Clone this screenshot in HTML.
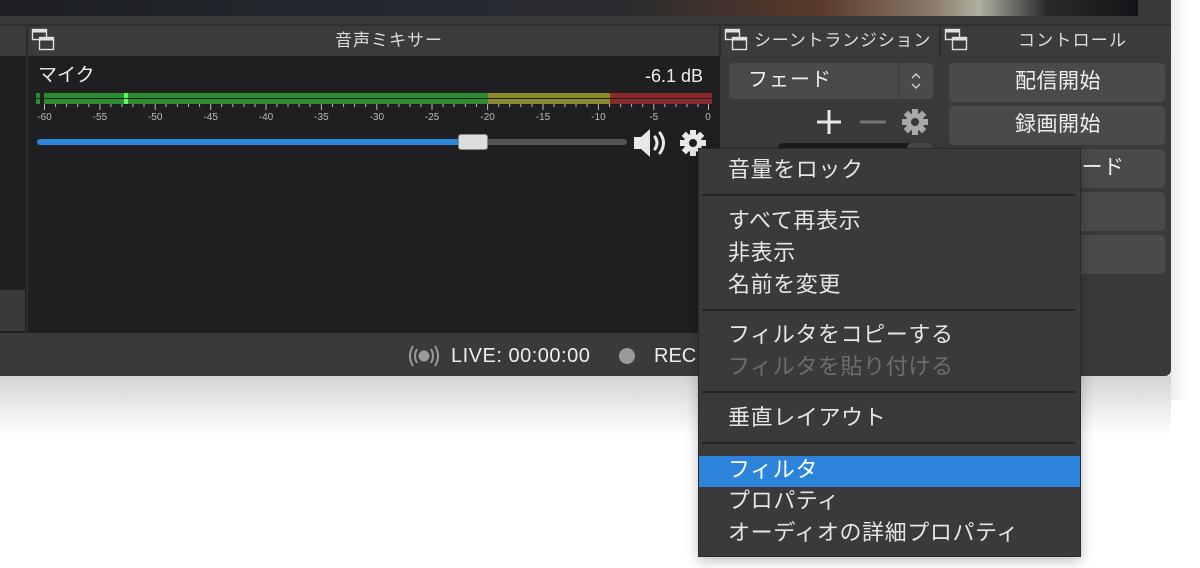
<!DOCTYPE html>
<html><head><meta charset="utf-8">
<style>
*{margin:0;padding:0;box-sizing:border-box}
body{width:1200px;height:568px;background:#fff;position:relative;overflow:hidden;font-family:"Liberation Sans","Noto Sans CJK JP",sans-serif;color:#e6e6e6}
.a{position:absolute}
.t{position:absolute;white-space:nowrap;line-height:1}
.m{position:absolute;white-space:nowrap;line-height:1;font-size:22px;letter-spacing:0.6px;left:728px}
</style></head><body>
<div class="a" style="left:0;top:376px;width:1171px;height:60px;background:linear-gradient(#d4d4d4,#fff)"></div>
<div class="a" style="left:1171px;top:0;width:29px;height:400px;background:linear-gradient(90deg,#ececec,#fff 60%)"></div>
<div class="a" style="left:0;top:0;width:1171px;height:376px;background:#3a393b;border-radius:0 0 6px 0"></div>
<div class="a" style="left:0;top:0;width:1138px;height:16px;background:linear-gradient(90deg,#1d1f24 0%,#262a30 40%,#2a2b2e 55%,#5a3a2a 72%,#8a7a6a 82%,#b0b0a0 86%,#2a2a2c 92%,#141418 100%)"></div>
<div class="a" style="left:0;top:24px;width:1171px;height:2px;background:#2f2e30"></div>
<div class="a" style="left:0;top:26px;width:1171px;height:30px;background:#3b3a3c"></div>
<div class="a" style="left:26px;top:26px;width:2px;height:307px;background:#2c2b2d"></div>
<div class="a" style="left:719px;top:26px;width:2px;height:30px;background:#2c2b2d"></div>
<div class="a" style="left:939px;top:26px;width:2px;height:30px;background:#2c2b2d"></div>
<svg class="a" style="left:31px;top:28px" width="26" height="26" viewBox="0 0 26 26" fill="none" stroke="#e0e0e0" stroke-width="1.4"><rect x="1.5" y="1.5" width="14" height="10"/><path d="M1.5 3h14" stroke-width="3"/><rect x="8.5" y="9.5" width="14" height="12" fill="#3b3a3c"/><path d="M8.5 11h14" stroke-width="3"/></svg>
<svg class="a" style="left:724px;top:28px" width="26" height="26" viewBox="0 0 26 26" fill="none" stroke="#e0e0e0" stroke-width="1.4"><rect x="1.5" y="1.5" width="14" height="10"/><path d="M1.5 3h14" stroke-width="3"/><rect x="8.5" y="9.5" width="14" height="12" fill="#3b3a3c"/><path d="M8.5 11h14" stroke-width="3"/></svg>
<svg class="a" style="left:944px;top:28px" width="26" height="26" viewBox="0 0 26 26" fill="none" stroke="#e0e0e0" stroke-width="1.4"><rect x="1.5" y="1.5" width="14" height="10"/><path d="M1.5 3h14" stroke-width="3"/><rect x="8.5" y="9.5" width="14" height="12" fill="#3b3a3c"/><path d="M8.5 11h14" stroke-width="3"/></svg>
<div class="t" style="left:335px;top:32px;font-size:17px;letter-spacing:1px;color:#ddd">音声ミキサー</div>
<div class="t" style="left:754px;top:32px;font-size:17px;letter-spacing:0.8px;color:#ddd">シーントランジション</div>
<div class="t" style="left:1018px;top:32px;font-size:17px;letter-spacing:1.2px;color:#ddd">コントロール</div>
<div class="a" style="left:0;top:56px;width:26px;height:277px;background:#1f1e20"></div>
<div class="a" style="left:0;top:290px;width:25px;height:41px;background:#3a393b"></div>
<div class="a" style="left:28px;top:56px;width:692px;height:277px;background:#1f1e20"></div>
<div class="t" style="left:38px;top:66px;font-size:19px;color:#eee">マイク</div>
<div class="t" style="left:645px;top:67px;font-size:18px;color:#eee">-6.1 dB</div>
<div class="a" style="left:36px;top:93px;width:4px;height:5px;background:#2e8a2e"></div>
<div class="a" style="left:36px;top:99px;width:4px;height:5px;background:#2e8a2e"></div>
<div class="a" style="left:44px;top:93px;width:444px;height:5px;background:#2e8a2e"></div>
<div class="a" style="left:44px;top:99px;width:444px;height:5px;background:#2e8a2e"></div>
<div class="a" style="left:488px;top:93px;width:122px;height:5px;background:#8a8a2e"></div>
<div class="a" style="left:488px;top:99px;width:122px;height:5px;background:#8a8a2e"></div>
<div class="a" style="left:610px;top:93px;width:102px;height:5px;background:#8a2a2a"></div>
<div class="a" style="left:610px;top:99px;width:102px;height:5px;background:#8a2a2a"></div>
<div class="a" style="left:124px;top:93px;width:4px;height:11px;background:#5f5"></div>
<div class="a" style="left:124px;top:98px;width:4px;height:1px;background:#1f1e20"></div>
<svg class="a" style="left:30px;top:104px" width="690" height="22">
<g stroke="#bbb" stroke-width="1">
<path d="M14.5 0v6M25.6 0v3M36.6 0v3M47.7 0v3M58.8 0v3M69.9 0v6M80.9 0v3M92 0v3M103 0v3M114 0v3M125.2 0v6M136 0v3M147.4 0v3M158.5 0v3M169.6 0v3M180.7 0v6M191.7 0v3M202.8 0v3M213.9 0v3M225 0v3M236 0v6M247 0v3M258 0v3M269 0v3M280 0v3M291.4 0v6M302.5 0v3M313.6 0v3M324.6 0v3M335.7 0v3M346.8 0v6M357.9 0v3M368.9 0v3M380 0v3M391 0v3M402 0v6M413 0v3M424 0v3M435.4 0v3M446.5 0v3M457.6 0v6M468.7 0v3M479.7 0v3M490.8 0v3M501.9 0v3M513 0v6M524 0v3M535 0v3M546 0v3M557 0v3M568.4 0v6M579.5 0v3M590.6 0v3M601.6 0v3M612.7 0v3M623.8 0v6M634.8 0v3M645.9 0v3M657 0v3M668 0v3M678.5 0v6"/></g>
<g fill="#bbb" font-size="10" font-family="Liberation Sans" text-anchor="middle">
<text x="14.5" y="16">-60</text><text x="69.9" y="16">-55</text><text x="125.2" y="16">-50</text><text x="180.7" y="16">-45</text><text x="236" y="16">-40</text><text x="291.4" y="16">-35</text><text x="346.8" y="16">-30</text><text x="402" y="16">-25</text><text x="457.6" y="16">-20</text><text x="513" y="16">-15</text><text x="568.4" y="16">-10</text><text x="623.8" y="16">-5</text><text x="678" y="16">0</text></g></svg>
<div class="a" style="left:37px;top:139px;width:590px;height:6px;background:#555;border-radius:3px"></div>
<div class="a" style="left:37px;top:139px;width:430px;height:6px;background:#2d84db;border-radius:3px"></div>
<div class="a" style="left:458px;top:134px;width:30px;height:16px;background:#ddd;border:1px solid #888;border-radius:3px"></div>
<svg class="a" style="left:632px;top:128px" width="40" height="30" viewBox="0 0 40 30"><path d="M2 9h7l9-8v28l-9-8H2z" fill="#e8e8e8"/><path d="M23 9q4 6 0 12M28 5q7 10 0 20" stroke="#e8e8e8" stroke-width="3" fill="none" stroke-linecap="round"/></svg>
<svg class="a" style="left:679px;top:129px" width="28" height="28" viewBox="-14 -14 28 28"><g fill="#e8e8e8"><circle r="9"/><g id="tt"><rect x="-3" y="-13" width="6" height="6"/></g><use href="#tt" transform="rotate(45)"/><use href="#tt" transform="rotate(90)"/><use href="#tt" transform="rotate(135)"/><use href="#tt" transform="rotate(180)"/><use href="#tt" transform="rotate(225)"/><use href="#tt" transform="rotate(270)"/><use href="#tt" transform="rotate(315)"/></g><circle r="4" fill="#1f1e20"/></svg>
<div class="a" style="left:729px;top:63px;width:204px;height:36px;background:#4a494b;border-radius:5px"></div>
<div class="a" style="left:898px;top:63px;width:1px;height:36px;background:#3a393b"></div>
<div class="t" style="left:748px;top:70px;font-size:20px;letter-spacing:1px;color:#eee">フェード</div>
<svg class="a" style="left:909px;top:71px" width="14" height="20" viewBox="0 0 14 20" fill="none" stroke="#ccc" stroke-width="1.5"><path d="M3 7l4-4 4 4M3 13l4 4 4-4"/></svg>
<svg class="a" style="left:815px;top:108px" width="110" height="28"><g stroke="#e8e8e8" stroke-width="3"><path d="M14 2v24M2 14h24"/></g><path d="M45 14h26" stroke="#777" stroke-width="3"/></svg>
<svg class="a" style="left:901px;top:108px" width="28" height="28" viewBox="-14 -14 28 28"><g fill="#a8a8a8"><circle r="9"/><g id="t2"><rect x="-3" y="-13" width="6" height="6"/></g><use href="#t2" transform="rotate(45)"/><use href="#t2" transform="rotate(90)"/><use href="#t2" transform="rotate(135)"/><use href="#t2" transform="rotate(180)"/><use href="#t2" transform="rotate(225)"/><use href="#t2" transform="rotate(270)"/><use href="#t2" transform="rotate(315)"/></g><circle r="4" fill="#3a393b"/></svg>
<div class="a" style="left:778px;top:143px;width:155px;height:12px;background:#1c1b1d;border-radius:5px 5px 0 0"></div>
<div class="a" style="left:907px;top:143px;width:26px;height:12px;background:#4a494b;border-radius:5px 5px 0 0"></div>
<div class="a" style="left:949px;top:63px;width:216px;height:39px;background:#4a494b;border-radius:4px"></div>
<div class="a" style="left:949px;top:106px;width:216px;height:39px;background:#4a494b;border-radius:4px"></div>
<div class="a" style="left:949px;top:149px;width:216px;height:39px;background:#4a494b;border-radius:4px"></div>
<div class="a" style="left:949px;top:192px;width:216px;height:39px;background:#4a494b;border-radius:4px"></div>
<div class="a" style="left:949px;top:235px;width:216px;height:39px;background:#4a494b;border-radius:4px"></div>
<div class="t" style="left:1015px;top:71px;font-size:21px;letter-spacing:0.5px;color:#eee">配信開始</div>
<div class="t" style="left:1015px;top:114px;font-size:21px;letter-spacing:0.5px;color:#eee">録画開始</div>
<div class="t" style="left:1060px;top:157px;font-size:21px;letter-spacing:0.5px;color:#eee">モード</div>
<svg class="a" style="left:407px;top:344px" width="34" height="24" viewBox="0 0 34 24" fill="none" stroke="#999" stroke-width="2"><circle cx="17" cy="12" r="4.5" fill="#999"/><path d="M10 5q-4 7 0 14M24 5q4 7 0 14M6 2q-6 10 0 20M28 2q6 10 0 20"/></svg>
<div class="t" style="left:451px;top:346px;font-size:20px;letter-spacing:0.5px;color:#eee">LIVE: 00:00:00</div>
<div class="a" style="left:619px;top:348px;width:16px;height:16px;border-radius:50%;background:#999"></div>
<div class="t" style="left:654px;top:346px;font-size:20px;color:#eee">REC:</div>
<div class="a" style="left:698px;top:148px;width:383px;height:409px;background:#3a393b;border:1px solid #2a292b;box-shadow:0 4px 12px rgba(0,0,0,0.25)"></div>
<div class="a" style="left:702px;top:194px;width:373px;height:2px;background:#242325"></div>
<div class="a" style="left:702px;top:309px;width:373px;height:2px;background:#242325"></div>
<div class="a" style="left:702px;top:391px;width:373px;height:2px;background:#242325"></div>
<div class="a" style="left:702px;top:442px;width:373px;height:2px;background:#242325"></div>
<div class="a" style="left:699px;top:456px;width:381px;height:31px;background:#2b84d9"></div>
<div class="m" style="top:159px">音量をロック</div>
<div class="m" style="top:210px">すべて再表示</div>
<div class="m" style="top:242px">非表示</div>
<div class="m" style="top:274px">名前を変更</div>
<div class="m" style="top:324px">フィルタをコピーする</div>
<div class="m" style="top:356px;color:#6e6d70">フィルタを貼り付ける</div>
<div class="m" style="top:407px">垂直レイアウト</div>
<div class="m" style="top:459px;color:#fff">フィルタ</div>
<div class="m" style="top:490px">プロパティ</div>
<div class="m" style="top:522px">オーディオの詳細プロパティ</div>
</body></html>
